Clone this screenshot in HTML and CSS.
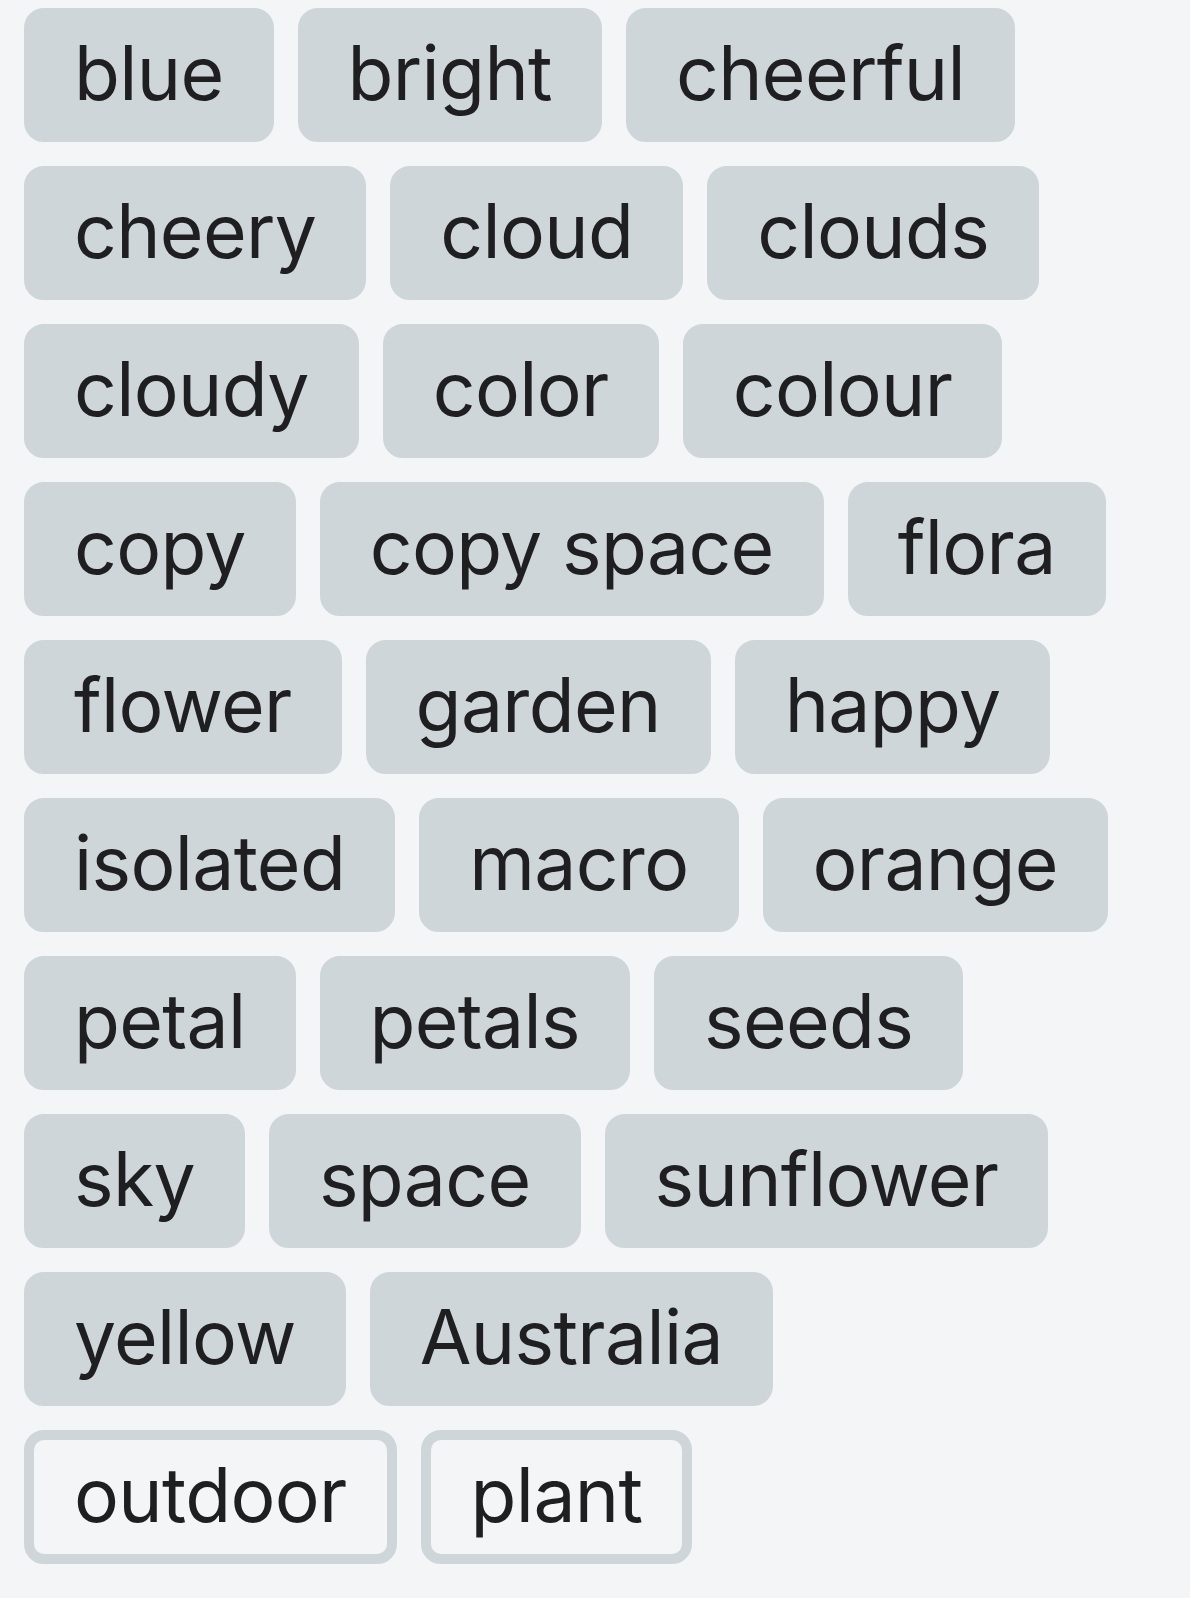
FILE: index.html
```html
<!DOCTYPE html>
<html lang="en">
<head>
<meta charset="utf-8">
<title>Tags</title>
<link rel="stylesheet" href="styles.css">
</head>
<body>
<ul class="tags">
  <li class="tag">blue</li>
  <li class="tag">bright</li>
  <li class="tag">cheerful</li>
  <li class="tag">cheery</li>
  <li class="tag">cloud</li>
  <li class="tag">clouds</li>
  <li class="tag">cloudy</li>
  <li class="tag">color</li>
  <li class="tag">colour</li>
  <li class="tag">copy</li>
  <li class="tag">copy space</li>
  <li class="tag">flora</li>
  <li class="tag">flower</li>
  <li class="tag">garden</li>
  <li class="tag">happy</li>
  <li class="tag">isolated</li>
  <li class="tag">macro</li>
  <li class="tag">orange</li>
  <li class="tag">petal</li>
  <li class="tag">petals</li>
  <li class="tag">seeds</li>
  <li class="tag">sky</li>
  <li class="tag">space</li>
  <li class="tag">sunflower</li>
  <li class="tag">yellow</li>
  <li class="tag">Australia</li>
  <li class="tag tag--outline">outdoor</li>
  <li class="tag tag--outline">plant</li>
</ul>
</body>
</html>
```
FILE: styles.css
```css
html, body {
  background: #f3f5f7;
}

body {
  margin: 0;
  padding: 8px 24px 0;
  font-family: "Inter", "Liberation Sans", sans-serif;
  color: #1f1f21;
}

.tags {
  list-style: none;
  margin: 0;
  padding: 0;
  display: flex;
  flex-wrap: wrap;
  gap: 24px;
}

.tag {
  box-sizing: border-box;
  height: 134px;
  padding: 0 40px 4px;
  border: 10px solid #cfd6da;
  border-radius: 20px;
  background: #cfd6da;
  font-size: 75px;
  letter-spacing: -0.66px;
  line-height: 110px;
  white-space: nowrap;
}

.tag--outline {
  background: transparent;
}
```
